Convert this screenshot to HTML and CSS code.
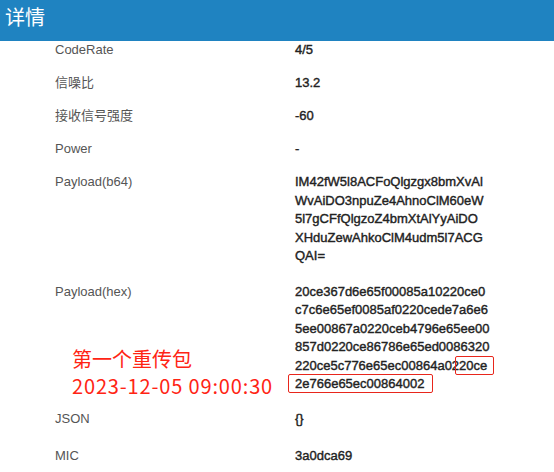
FILE: index.html
```html
<!DOCTYPE html>
<html lang="zh-CN">
<head>
    <meta charset="UTF-8">
    <meta name="viewport" content="width=device-width, initial-scale=1.0">
    <title>详情</title>
    <link rel="stylesheet" href="styles.css">
</head>
<body>
    <div class="panel">
        <header class="panel-header">详情</header>
        <div class="detail-list">
            <div class="row"><div class="label">CodeRate</div><div class="value">4/5</div></div>
            <div class="row"><div class="label">信噪比</div><div class="value">13.2</div></div>
            <div class="row"><div class="label">接收信号强度</div><div class="value">-60</div></div>
            <div class="row"><div class="label">Power</div><div class="value">-</div></div>
            <div class="row row-multi">
                <div class="label">Payload(b64)</div>
                <div class="value">IM42fW5l8ACFoQlgzgx8bmXvAl<br>WvAiDO3npuZe4AhnoClM60eW<br>5l7gCFfQlgzoZ4bmXtAlYyAiDO<br>XHduZewAhkoClM4udm5l7ACG<br>QAI=</div>
            </div>
            <div class="row row-multi">
                <div class="label">Payload(hex)</div>
                <div class="value">20ce367d6e65f00085a10220ce0<br>c7c6e65ef0085af0220cede7a6e6<br>5ee00867a0220ceb4796e65ee00<br>857d0220ce86786e65ed0086320<br>220ce5c776e65ec00864a02<span class="mark mark-tail">20ce</span><br><span class="mark mark-line">2e766e65ec00864002</span></div>
                <div class="note">第一个重传包<br><span class="note-time">2023-12-05 09:00:30</span></div>
            </div>
            <div class="row row-json"><div class="label">JSON</div><div class="value">{}</div></div>
            <div class="row"><div class="label">MIC</div><div class="value">3a0dca69</div></div>
        </div>
    </div>
</body>
</html>
```

FILE: styles.css
```css
body {
    margin: 0;
    font-family: "Liberation Sans", Arial, "Noto Sans CJK SC", sans-serif;
    font-size: 13px;
    color: #555;
    background: #fff;
}

.panel-header {
    height: 41px;
    box-sizing: border-box;
    padding: 4px 5px 0;
    line-height: 26px;
    font-size: 20px;
    color: #fff;
    background-color: #1f83c1;
    font-family: "Noto Sans CJK SC", sans-serif;
}

.row {
    position: relative;
    display: grid;
    grid-template-columns: 240px 230px;
    padding: 7.3px 0 7.3px 55px;
    line-height: 18.5px;
}
.row:first-child { padding-top: 0; }
.row-multi { padding-bottom: 9.5px; }
.row-json { padding-bottom: 11px; }

.value {
    color: #222;
    word-break: break-all;
    -webkit-text-stroke: 0.4px #222;
}

/* 截图上的标注 */
.mark {
    border: 1px solid #e8261c;
    border-radius: 2px;
    padding: 1px 0;
}
.mark-tail {
    margin-left: -4px;
    padding-left: 3px;
    padding-right: 6px;
}
.mark-line {
    margin-left: -7px;
    padding-left: 6px;
    padding-right: 8px;
}
.note {
    position: absolute;
    left: 72px;
    top: 70px;
    font-family: "Noto Sans CJK SC", sans-serif;
    font-size: 20px;
    line-height: 27px;
    color: #ff2414;
    -webkit-text-stroke: 0;
}
.note-time { letter-spacing: 0.85px; }
```
